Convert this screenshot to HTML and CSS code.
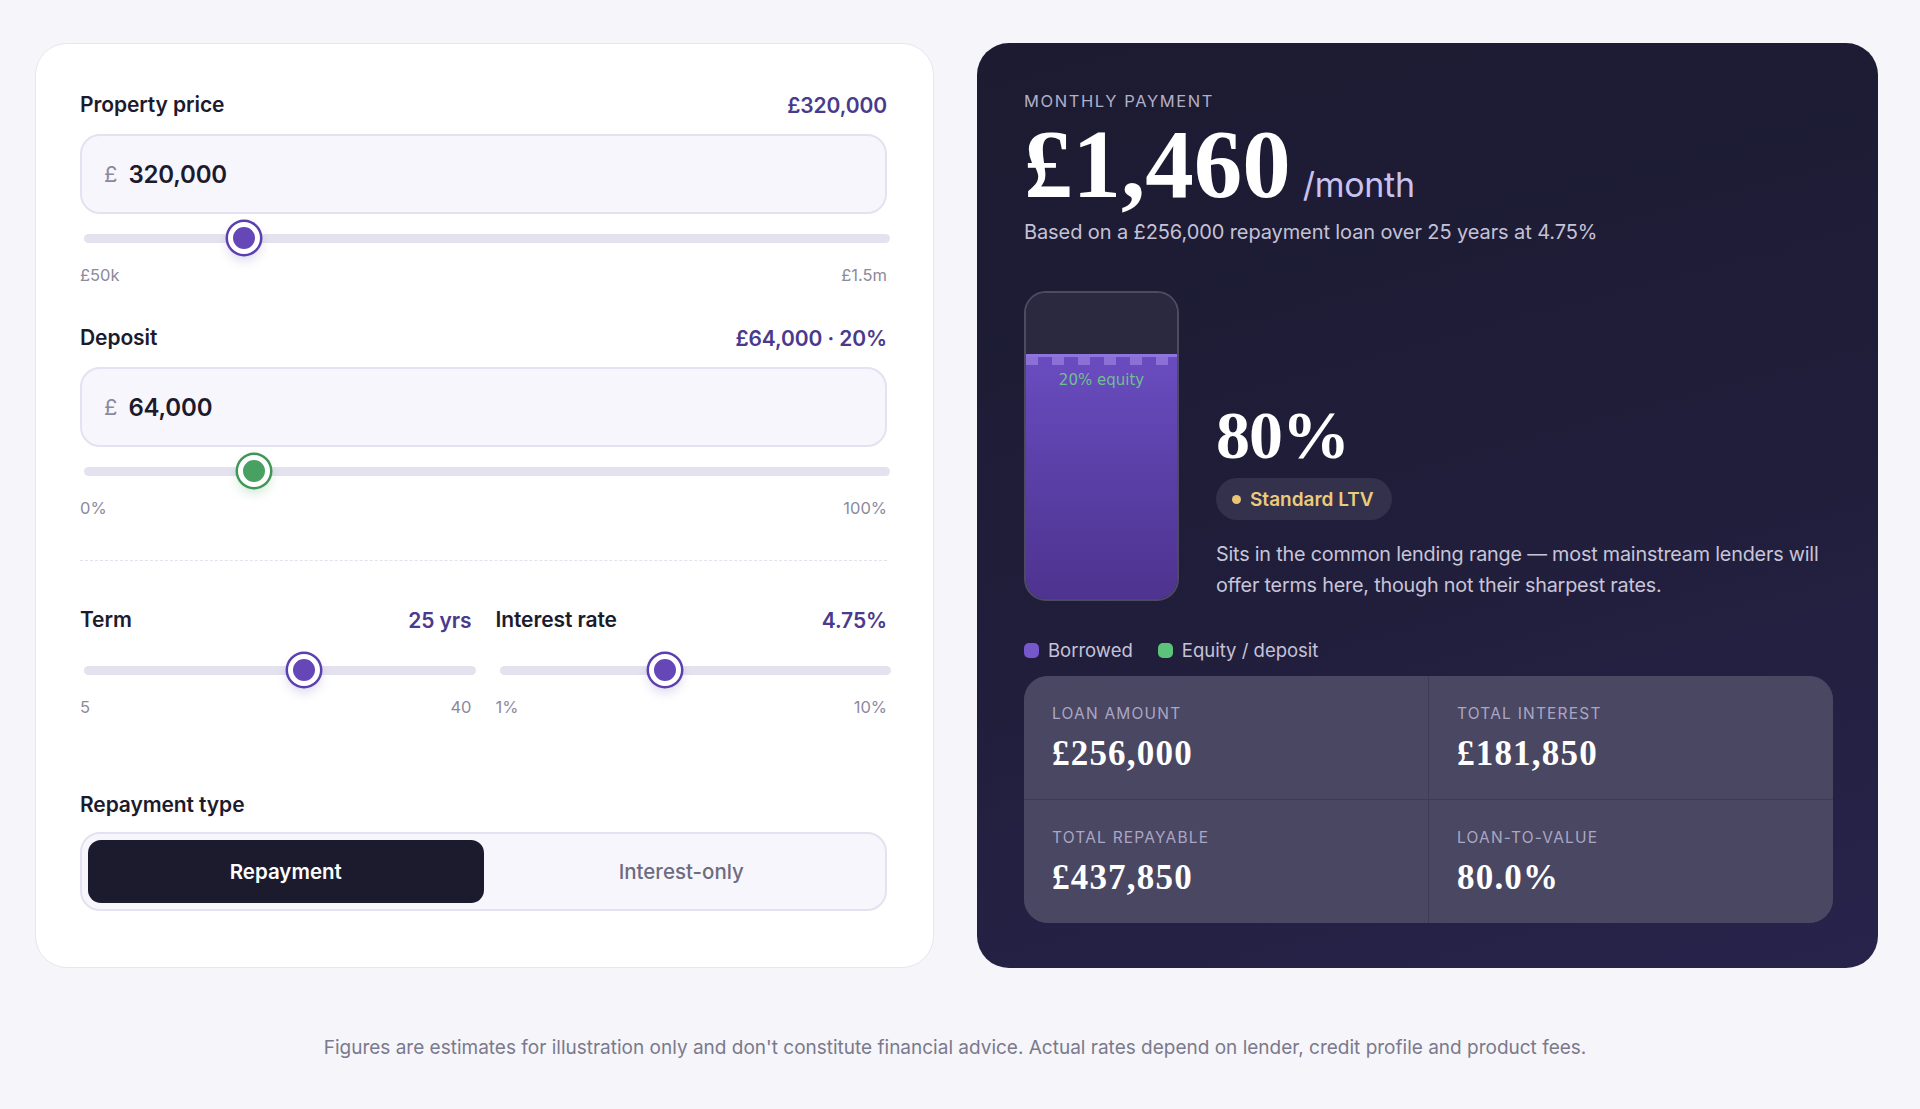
FILE: index.html
```html
<!DOCTYPE html>
<html lang="en">
<head>
<meta charset="utf-8">
<title>Mortgage calculator</title>
<link rel="stylesheet" href="styles.css">
</head>
<body>
<main class="layout">
  <section class="card inputs">
    <div class="field">
      <div class="field-head"><span class="label">Property price</span><span class="value">£320,000</span></div>
      <div class="money-input"><span class="cur">£</span><span class="num">320,000</span></div>
      <div class="slider"><div class="track"></div><div class="thumb" style="left:19.85%"></div></div>
      <div class="range"><span>£50k</span><span>£1.5m</span></div>
    </div>
    <div class="field second">
      <div class="field-head"><span class="label">Deposit</span><span class="value">£64,000 · 20%</span></div>
      <div class="money-input"><span class="cur">£</span><span class="num">64,000</span></div>
      <div class="slider"><div class="track"></div><div class="thumb green" style="left:21.1%"></div></div>
      <div class="range"><span>0%</span><span>100%</span></div>
    </div>
    <hr class="divider">
    <div class="pair">
      <div class="field">
        <div class="field-head"><span class="label">Term</span><span class="value">25 yrs</span></div>
        <div class="slider tall"><div class="track"></div><div class="thumb" style="left:56.3%"></div></div>
        <div class="range"><span>5</span><span>40</span></div>
      </div>
      <div class="field">
        <div class="field-head"><span class="label">Interest rate</span><span class="value">4.75%</span></div>
        <div class="slider tall"><div class="track"></div><div class="thumb" style="left:42.2%"></div></div>
        <div class="range"><span>1%</span><span>10%</span></div>
      </div>
    </div>
    <div class="repay">
      <div class="label">Repayment type</div>
      <div class="toggle">
        <button class="opt active">Repayment</button>
        <button class="opt">Interest-only</button>
      </div>
    </div>
  </section>

  <section class="card results">
    <div class="eyebrow">MONTHLY PAYMENT</div>
    <div class="payment"><span class="big">£1,460</span><span class="per">/month</span></div>
    <p class="basis">Based on a £256,000 repayment loan over 25 years at 4.75%</p>

    <div class="ltv">
      <div class="bar">
        <div class="bar-equity"></div>
        <div class="bar-loan">
          <div class="ticks"></div>
          <span class="eq-label">20% equity</span>
        </div>
      </div>
      <div class="ltv-info">
        <div class="ltv-pct">80%</div>
        <div class="badge"><span class="dot"></span>Standard LTV</div>
        <p class="ltv-desc">Sits in the common lending range — most mainstream lenders will<br>offer terms here, though not their sharpest rates.</p>
      </div>
    </div>

    <div class="legend">
      <span class="key"><span class="sw purple"></span>Borrowed</span>
      <span class="key"><span class="sw green"></span>Equity / deposit</span>
    </div>

    <div class="stats">
      <div class="stat"><div class="stat-label">LOAN AMOUNT</div><div class="stat-value">£256,000</div></div>
      <div class="stat"><div class="stat-label">TOTAL INTEREST</div><div class="stat-value">£181,850</div></div>
      <div class="stat"><div class="stat-label">TOTAL REPAYABLE</div><div class="stat-value">£437,850</div></div>
      <div class="stat"><div class="stat-label">LOAN-TO-VALUE</div><div class="stat-value">80.0%</div></div>
    </div>
  </section>
</main>
<p class="disclaimer">Figures are estimates for illustration only and don't constitute financial advice. Actual rates depend on lender, credit profile and product fees.</p>
</body>
</html>
```

FILE: styles.css
```css
* { box-sizing: border-box; }
html, body { margin: 0; padding: 0; }
body {
  background: #f5f5fa;
  font-family: Inter, "Noto Sans", "Liberation Sans", sans-serif;
  color: #1c1b2e;
  width: 1920px;
  min-height: 1109px;
}
.layout {
  display: grid;
  grid-template-columns: 899px 901px;
  column-gap: 43px;
  padding: 43px 42px 0 35px;
  align-items: stretch;
}
.card { border-radius: 32px; }

/* ---------- left card ---------- */
.inputs {
  background: #ffffff;
  border: 1.5px solid #e7e5f1;
  padding: 48px 46px 48px 44px;
}
.field-head {
  display: flex;
  justify-content: space-between;
  align-items: center;
  height: 26px;
}
.label { font-size: 21px; font-weight: 600; color: #1c1b2e; line-height: 26px; letter-spacing: -0.1px; }
.value { font-size: 21px; font-weight: 600; color: #4a3a8d; letter-spacing: -0.1px; }
.money-input {
  margin-top: 16px;
  height: 80px;
  border: 2px solid #e4e1f1;
  background: #f7f6fc;
  border-radius: 20px;
  display: flex;
  align-items: center;
  padding-left: 22px;
  gap: 11px;
}
.cur { font-size: 22px; color: #8a889b; font-weight: 400; }
.num { font-size: 24px; font-weight: 600; color: #1c1b2e; letter-spacing: -0.2px; }
.slider {
  position: relative;
  height: 20px;
  margin: 14px -3px 0 4px;
  display: flex;
  align-items: center;
}
.slider.tall { margin-top: 27px; }
.track {
  width: 100%;
  height: 9px;
  border-radius: 5px;
  background: #e4e2ef;
}
.thumb {
  position: absolute;
  top: 50%;
  width: 32px;
  height: 32px;
  border-radius: 50%;
  background: #6647b8;
  border: 5px solid #ffffff;
  box-shadow: 0 0 0 2.5px #5b3fae, 0 6px 12px rgba(80, 60, 160, 0.22);
  transform: translate(-50%, -50%);
}
.thumb.green {
  background: #48a160;
  box-shadow: 0 0 0 2.5px #3f9657, 0 6px 12px rgba(60, 150, 80, 0.25);
}
.range {
  display: flex;
  justify-content: space-between;
  margin-top: 17px;
  font-size: 16.5px;
  line-height: 20px;
  color: #8c8a9b;
}
.field.second { margin-top: 40px; }
.divider {
  border: 0;
  border-top: 1.5px dashed #e3e1ec;
  margin: 42px 0 0;
}
.pair {
  margin-top: 46px;
  display: grid;
  grid-template-columns: 1fr 1fr;
  column-gap: 24px;
}
.pair .slider { margin-right: -4px; }
.repay { margin-top: 75px; }
.toggle {
  margin-top: 14px;
  height: 79px;
  border: 2px solid #e4e1f1;
  background: #f7f6fc;
  border-radius: 20px;
  padding: 6px;
  display: grid;
  grid-template-columns: 1fr 1fr;
}
.opt {
  border: 0;
  background: transparent;
  font-family: inherit;
  font-size: 20.5px;
  font-weight: 500;
  color: #6d6b7f;
  border-radius: 13px;
}
.opt.active {
  background: #1c1b2e;
  color: #ffffff;
  font-weight: 600;
}

/* ---------- right card ---------- */
.results {
  background: linear-gradient(165deg, #1c1b31 0%, #1f1d38 45%, #28234b 100%);
  padding: 48px 45px 45px 47px;
  color: #ffffff;
}
.eyebrow {
  font-size: 16.5px;
  letter-spacing: 1.6px;
  color: #b3afc7;
  line-height: 20px;
}
.payment {
  margin-top: 6px;
  display: flex;
  align-items: baseline;
  gap: 12px;
  line-height: 1;
}
.big {
  font-family: "Liberation Serif", "DejaVu Serif", serif;
  font-weight: 700;
  font-size: 97px;
  line-height: 96px;
  letter-spacing: 0;
  color: #ffffff;
}
.per { font-size: 34px; color: #c9c1ef; letter-spacing: -0.3px; }
.basis {
  margin: 6px 0 0;
  font-size: 20px;
  line-height: 26px;
  color: #c5c2d7;
  letter-spacing: -0.1px;
}
.ltv {
  margin-top: 46px;
  display: flex;
  align-items: flex-end;
  gap: 37px;
}
.bar {
  width: 155px;
  height: 310px;
  border: 2.5px solid #4d4b62;
  border-radius: 22px;
  overflow: hidden;
  display: flex;
  flex-direction: column;
  background: #2a2940;
  flex: none;
}
.bar-equity { height: 61px; background: #2a2940; }
.bar-loan {
  flex: 1;
  background: linear-gradient(180deg, #6a4cc0 0%, #5a3fa6 50%, #4e3390 100%);
  border-top: 3px solid #8e74dc;
  display: flex;
  flex-direction: column;
  align-items: center;
}
.ticks {
  width: 100%;
  height: 8px;
  background: repeating-linear-gradient(90deg, #8b70d6 0 12px, transparent 12px 26px);
}
.eq-label {
  margin-top: 6px;
  font-family: "DejaVu Sans", sans-serif;
  font-size: 15px;
  color: #6fbf92;
}
.ltv-info { flex: 1; }
.ltv-pct {
  font-family: "Liberation Serif", "DejaVu Serif", serif;
  font-weight: 700;
  font-size: 68px;
  line-height: 68px;
  letter-spacing: -1px;
  color: #ffffff;
}
.badge {
  margin-top: 9px;
  display: inline-flex;
  align-items: center;
  gap: 9px;
  height: 42px;
  padding: 0 18px 0 16px;
  border-radius: 21px;
  background: #33314b;
  color: #eccb7c;
  font-size: 19px;
  font-weight: 600;
}
.dot { width: 9px; height: 9px; border-radius: 50%; background: #e8c676; }
.ltv-desc {
  margin: 19px 0 0;
  font-size: 19.8px;
  line-height: 31px;
  color: #c8c5d8;
  white-space: nowrap;
  letter-spacing: -0.2px;
}
.legend {
  margin-top: 37px;
  display: flex;
  gap: 25px;
  font-size: 18.5px;
  line-height: 24px;
  color: #c6c3d7;
}
.key { display: inline-flex; align-items: center; gap: 9px; }
.sw { width: 15px; height: 15px; border-radius: 5px; }
.sw.purple { background: #7657cc; }
.sw.green { background: #5cc47a; }
.stats {
  margin-top: 14px;
  display: grid;
  grid-template-columns: 1fr 1fr;
  gap: 1px;
  background: #3e3b56;
  border-radius: 24px;
  overflow: hidden;
}
.stat {
  background: #4a4763;
  padding: 28px 28px 25px;
}
.stat-label {
  font-size: 15.5px;
  line-height: 20px;
  letter-spacing: 1.2px;
  color: #aaa6c4;
}
.stat-value {
  margin-top: 10px;
  font-family: "Liberation Serif", "DejaVu Serif", serif;
  font-weight: 700;
  font-size: 35px;
  line-height: 40px;
  color: #ffffff;
  letter-spacing: 1.2px;
}

.disclaimer {
  margin: 68px 0 0;
  text-align: center;
  font-size: 19px;
  line-height: 24px;
  color: #7b798c;
  padding-right: 10px;
}
```
